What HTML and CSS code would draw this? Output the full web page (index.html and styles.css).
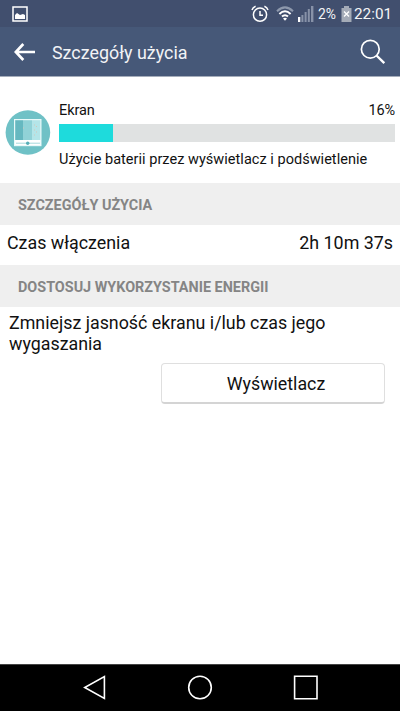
FILE: index.html
```html
<!DOCTYPE html>
<html lang="pl">
<head>
<meta charset="utf-8">
<title>Szczegóły użycia</title>
<link rel="stylesheet" href="styles.css">
</head>
<body>
<div class="screen">
  <div class="status">
    <svg class="picture" width="16" height="16" viewBox="0 0 16 16"><rect x="1" y="1" width="14" height="14" fill="none" stroke="#fff" stroke-width="1.5"/><path d="M3 13V9l2-2 3 2 3-1 2 1v4z" fill="#fff"/></svg>
    <svg class="alarm" width="18" height="18" viewBox="0 0 18 18" fill="none" stroke="#fff" stroke-width="1.5"><circle cx="9" cy="9.7" r="6.6"/><path d="M9 6v4.2h3M1 5Q1.8 2.4 4.6 1.2M17 5Q16.2 2.4 13.4 1.2"/></svg>
    <svg class="wifi" width="18" height="15" viewBox="0 0 18 15" fill="none" stroke="#fff" stroke-width="2"><path d="M1 5.2Q9-2.5 17 5.2" stroke="#8d98ac"/><path d="M3.4 7.9Q9 2.7 14.6 7.9M6 10.6Q9 7.9 12 10.6"/><path d="M7 12.4Q9 10.9 11 12.4L9 14.7z" fill="#fff" stroke="none"/></svg>
    <svg class="signal" width="16" height="16" viewBox="0 0 16 16" fill="#8792a8"><path d="M0 11h2.3v5H0z" fill="#fff"/><path d="M3.4 9h2v7h-2zM6.6 6h2v10h-2zM9.8 3h2v13h-2zM13 0h2.4v16H13z"/></svg>
    <span class="charge">2%</span>
    <svg class="battery" width="11" height="16" viewBox="0 0 11 16"><path d="M3 0h5v2h2.5v14H.5V2H3z" fill="#a4abb7"/><path d="M3 5.5l5 5M8 5.5l-5 5" stroke="#fff" stroke-width="1.3"/></svg>
    <span class="clock">22:01</span>
  </div>
  <header class="bar">
    <svg class="back" width="22" height="18" viewBox="0 0 22 18" fill="none" stroke="#fff" stroke-width="2.7"><path d="M9.3 1L1.8 9l7.5 8M2 9h19"/></svg>
    <h1 class="title">Szczegóły użycia</h1>
    <svg class="search" width="26" height="26" viewBox="0 0 26 26" fill="none" stroke="#fff"><circle cx="10.3" cy="10.2" r="8.9" stroke-width="1.7"/><path d="M16.5 16.5l7.8 7.6" stroke-width="2.4"/></svg>
  </header>
  <section class="usage">
    <svg class="app" width="46" height="45" viewBox="0 0 46 45"><circle cx="22.9" cy="22.5" r="22.3" fill="#6fc1c6"/><path d="M10 10h8v20h-8z" fill="#66b8c0"/><path d="M18 10h9v20h-9z" fill="#91d2d7"/><path d="M27 10h9v20h-9z" fill="#b4e5e8"/><path d="M10 30h26v5H10z" fill="#fff"/><path d="M11 33.2h24" stroke="#a5d9dc"/><rect x="9.6" y="9.6" width="26.3" height="26" fill="none" stroke="#e9f9f9" stroke-width="1.2"/><circle cx="22.7" cy="33.3" r="1.7" fill="#56aeb7"/><path d="M29 15h1M31 16.5h1M29 20h1M31 22h1M29 25h1M18 18h1" stroke="#d5c6b8"/></svg>
    <div class="meter">
      <div class="labels"><span>Ekran</span><span>16%</span></div>
      <div class="track"><div class="fill" style="width:16%"></div></div>
      <div class="about">Użycie baterii przez wyświetlacz i podświetlenie</div>
    </div>
  </section>
  <h2 class="heading details">Szczegóły użycia</h2>
  <div class="row"><span class="name">Czas włączenia</span><span class="time">2h 10m 37s</span></div>
  <h2 class="heading energy">Dostosuj wykorzystanie energii</h2>
  <div class="tip">Zmniejsz jasność ekranu i/lub czas jego<br>wygaszania</div>
  <button class="action"><span>Wyświetlacz</span></button>
  <nav class="nav">
    <svg width="240" height="26" viewBox="0 0 240 26" fill="none" stroke="#fff" stroke-width="1.6"><path d="M24.4 1.5v22L4.7 12.5z"/><circle cx="120" cy="12.5" r="11.3"/><path d="M214.6 1.3h22.4v22.4h-22.4z"/></svg>
  </nav>
</div>
</body>
</html>
```
FILE: styles.css
```css
* { box-sizing: border-box; }
body { margin: 0; font-family: Roboto, sans-serif; color: #111; background: #fff; }
svg { display: block; flex: none; }
h1, h2 { margin: 0; }
.screen { width: 400px; height: 711px; display: flex; flex-direction: column; overflow: hidden; }
.status { height: 27px; flex: none; display: flex; align-items: center; background: #414f6e; color: #f4f5f7; white-space: nowrap; }
.picture { margin-left: 12px; }
.alarm { margin-left: 223px; }
.wifi { margin-left: 7px; }
.signal { margin-left: 4px; }
.charge { width: 24px; margin-left: 4px; font-size: 13.9px; line-height: 27px; padding-top: 2px; }
.battery { margin-left: -1px; }
.clock { margin-left: 2px; font-size: 15.3px; line-height: 27px; padding-top: 2px; }
.bar { height: 50px; flex: none; display: flex; align-items: center; background: #465878; border-bottom: 1px solid #a5adbb; color: #f2f3f6; }
.back { margin-left: 14px; }
.title { margin-left: 16px; font-size: 17.9px; font-weight: 400; line-height: 48px; padding-top: 2px; }
.search { margin-left: auto; margin-right: 14px; }
.usage { height: 106px; flex: none; display: flex; padding: 32px 5px 0; }
.app { margin: 1px 8px 0 0; }
.meter { flex: 1; font-size: 14.5px; }
.labels { display: flex; justify-content: space-between; height: 15px; line-height: 4px; }
.labels span { letter-spacing: -0.1px; }
.track { height: 18px; background: #e0e2e2; }
.fill { height: 18px; background: #1edbdc; }
.about { line-height: 35px; white-space: nowrap; letter-spacing: 0.03px; }
.heading { height: 42px; flex: none; padding: 2px 18px 0; background: #efefef; color: #858585; font-size: 14.4px; font-weight: 700; line-height: 42px; text-transform: uppercase; white-space: nowrap; }
.row { height: 40px; flex: none; display: flex; justify-content: space-between; padding: 0 7px; font-size: 17.85px; line-height: 36px; }
.tip { padding: 5px 9px 0; height: 56px; font-size: 17.83px; line-height: 21px; white-space: nowrap; }
.action { align-self: flex-end; flex: none; width: 224px; height: 41px; margin-right: 15px; padding: 0 0 0 6px; border: 1px solid #dfdfdf; border-bottom: 2px solid #d4d4d4; border-radius: 4px; background: #fff; font: 17.8px Roboto, sans-serif; color: #111; }
.nav { height: 47px; flex: none; margin-top: auto; border-top: 1px solid #444; background: #000; display: flex; justify-content: center; padding-top: 10px; }
```
